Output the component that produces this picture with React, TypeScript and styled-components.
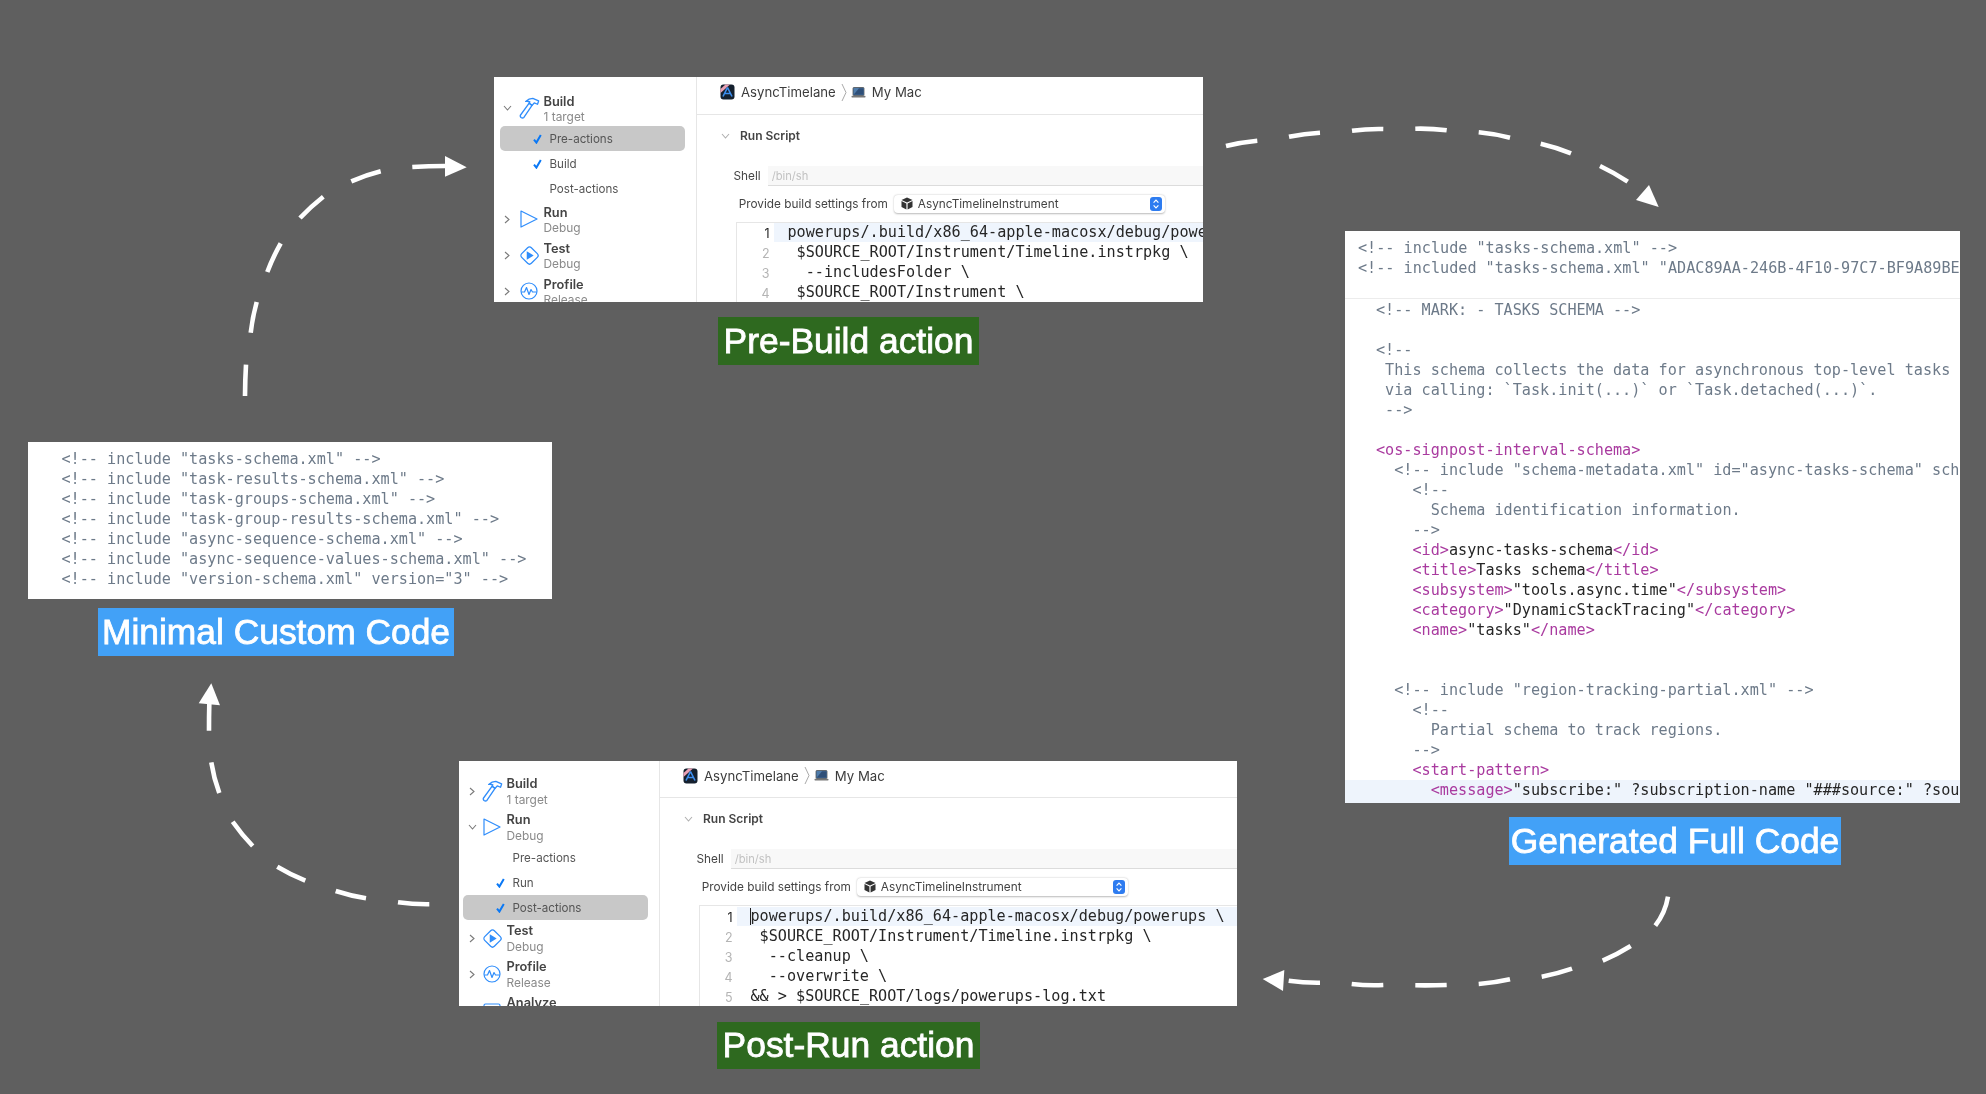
import React from "react";
import styled, { createGlobalStyle } from "styled-components";

const GlobalStyle = createGlobalStyle`
  html, body { margin: 0; padding: 0; background: #5f5f5f; overflow: hidden; }
`;

const MONO = `"DejaVu Sans Mono", "Liberation Mono", monospace`;
const UI = `Inter, "Liberation Sans", sans-serif`;
const BLUE = "#2f8dfb";

const Canvas = styled.div`
  position: relative;
  width: 1986px;
  height: 1094px;
  background: #5f5f5f;
  overflow: hidden;
`;

const Node = styled.div<{ $x: number; $y: number; $w: number; $h: number }>`
  position: absolute;
  left: ${(p) => p.$x}px;
  top: ${(p) => p.$y}px;
  width: ${(p) => p.$w}px;
  height: ${(p) => p.$h}px;
`;

const Panel = styled(Node)`
  background: #fff;
  overflow: hidden;
  filter: blur(0.45px);
`;

const SchemePanel = styled(Panel)`
  display: flex;
`;

const Caption = styled(Node)<{ $bg: string }>`
  display: flex;
  align-items: center;
  justify-content: center;
  background: ${(p) => p.$bg};
  color: #fff;
  font-family: "Liberation Sans", Arial, sans-serif;
  font-size: 35.4px;
  font-weight: 400;
  -webkit-text-stroke: 0.8px #fff;
  white-space: nowrap;
  filter: blur(0.3px);
`;

/* ---------- sidebar ---------- */

const Sidebar = styled.div<{ $w: number; $inset: number; $top: number }>`
  flex: none;
  box-sizing: border-box;
  width: ${(p) => p.$w}px;
  padding-top: ${(p) => p.$top}px;
  border-right: 1px solid #e6e6e6;
  overflow: hidden;
  --inset: ${(p) => p.$inset}px;
  font-family: ${UI};
`;

const GroupRow = styled.div`
  display: flex;
  align-items: center;
  height: 36px;
`;

const Chevron = styled.span`
  flex: none;
  width: 12px;
  margin-left: 7px;
  display: flex;
  justify-content: center;
`;

const IconSlot = styled.span`
  flex: none;
  width: 22px;
  margin-left: calc(3px + var(--inset));
  display: flex;
  justify-content: center;
`;

const GroupText = styled.div`
  margin-left: 3.5px;
  padding-top: 1.6px;
  white-space: nowrap;
`;

const GroupTitle = styled.div`
  font-size: 12.8px;
  line-height: 15.4px;
  font-weight: 600;
  color: #444;
`;

const GroupSub = styled.div`
  font-size: 11.9px;
  line-height: 15.4px;
  color: #8a8a8a;
`;

const ActionRow = styled.div<{ $selected?: boolean }>`
  display: flex;
  align-items: center;
  box-sizing: border-box;
  height: 25px;
  margin: 0 11px 0 calc(3.5px + var(--inset));
  border-radius: 5px;
  background: ${(p) => (p.$selected ? "#c8c8c8" : "transparent")};
`;

const CheckSlot = styled.span`
  flex: none;
  width: 17px;
  margin-left: 33px;
  display: flex;
`;

const ActionLabel = styled.span`
  font-size: 11.6px;
  color: #555;
  white-space: nowrap;
`;

/* ---------- script pane ---------- */

const ScriptPane = styled.div`
  flex: 1;
  min-width: 0;
  overflow: hidden;
  font-family: ${UI};
`;

const PathBar = styled.div<{ $h: number }>`
  display: flex;
  align-items: center;
  box-sizing: border-box;
  height: ${(p) => p.$h}px;
  padding: 0 0 7px 23px;
  border-bottom: 1px solid #e6e6e6;
  font-size: 13.2px;
  color: #3c3c3c;
  white-space: nowrap;
`;

const PathText = styled.span`
  margin-left: 6px;
`;

const PathSep = styled.span`
  display: flex;
  margin: 0 4px 0 5px;
`;

const SectionTitle = styled.div`
  display: flex;
  align-items: center;
  height: 20px;
  margin-top: 10.6px;
  padding-left: 24px;
  font-size: 12px;
  font-weight: 600;
  color: #444;
  gap: 10px;
`;

const ShellRow = styled.div`
  display: flex;
  align-items: center;
  height: 19px;
  margin-top: 21.4px;
  padding-left: 36.5px;
  font-size: 11.8px;
  color: #444;
`;

const ShellField = styled.div`
  flex: 1;
  display: flex;
  align-items: center;
  height: 19px;
  margin-left: 7px;
  padding-left: 4px;
  background: #f8f8f8;
  border-bottom: 1px solid #dcdcdc;
  color: #c2c2c2;
  font-size: 11.2px;
`;

const SettingsRow = styled.div`
  display: flex;
  align-items: center;
  height: 18px;
  margin-top: 9px;
  padding-left: 41.7px;
  font-size: 11.8px;
  color: #444;
  white-space: nowrap;
`;

const SelectBox = styled.div`
  position: relative;
  display: flex;
  align-items: center;
  box-sizing: border-box;
  width: 271px;
  height: 18px;
  margin-left: 6px;
  padding-left: 7px;
  gap: 5px;
  border-radius: 4px;
  background: #fff;
  box-shadow: 0 0.5px 2px rgba(0, 0, 0, 0.28);
`;

const Stepper = styled.span`
  position: absolute;
  right: 3px;
  top: 2px;
  display: flex;
  width: 12px;
  height: 14px;
  border-radius: 3px;
  background: #2e7cf0;
`;

const CodeBox = styled.div<{ $pad: number }>`
  margin: 9px 0 0 38.5px;
  padding-top: ${(p) => p.$pad}px;
  border-left: 1px solid #e6e6e6;
  border-top: 1px solid #e6e6e6;
`;

const ScriptLine = styled.div`
  display: flex;
  height: 20px;
  line-height: 19px;
  font-family: ${MONO};
  font-size: 15.15px;
  white-space: pre;
  color: #262626;
`;

const LineNumber = styled.span<{ $active?: boolean }>`
  flex: none;
  box-sizing: border-box;
  width: 37px;
  padding-right: 4px;
  text-align: right;
  font-size: 12.5px;
  line-height: 21px;
  font-family: ${UI};
  color: ${(p) => (p.$active ? "#222" : "#b4b4b4")};
`;

const LineBody = styled.span<{ $active?: boolean; $caret?: boolean }>`
  flex: 1;
  position: relative;
  padding-left: 14px;
  height: 19px;
  background: ${(p) => (p.$active ? "#eff5fd" : "transparent")};
  ${(p) =>
    p.$caret
      ? `&::before { content: ""; position: absolute; left: 13px; top: 1px; width: 1px; height: 17px; background: #222; }`
      : ""}
`;

const Indent = styled.span<{ $n: number }>`
  padding-left: ${(p) => p.$n}ch;
`;

/* ---------- xml ---------- */

const XmlHead = styled.div`
  box-sizing: border-box;
  height: 67.6px;
  padding: 7.2px 0 0 13px;
  border-bottom: 1px solid #ececec;
`;

const XmlBody = styled.div`
  padding: 1px 0 0 31px;
`;

const MinimalBody = styled.div`
  padding: 7px 0 0 33.5px;
`;

const XmlLine = styled.div<{ $indent?: number; $hl?: boolean }>`
  box-sizing: border-box;
  height: ${(p) => (p.$hl ? 24 : 20.04)}px;
  line-height: 20px;
  font-family: ${MONO};
  font-size: 15.15px;
  white-space: pre;
  color: #6d7a89;
  padding-left: ${(p) => p.$indent ?? 0}ch;
  ${(p) => (p.$hl ? "margin-left: -31px; padding-left: calc(31px + 6ch); background: #eef4fc;" : "")}
`;

const Tag = styled.span`
  color: #a93a9f;
`;

const Val = styled.span`
  color: #262626;
`;

/* ---------- arrows ---------- */

const ArrowLayer = styled.svg`
  position: absolute;
  left: 0;
  top: 0;
  width: 1986px;
  height: 1094px;
  pointer-events: none;
`;

/* ---------- icons ---------- */

const S = { fill: "none", stroke: BLUE, strokeWidth: 1.2, strokeLinejoin: "round" as const };

const Hammer = () => (
  <svg width="21" height="22" viewBox="0 0 19 20">
    <path {...S} d="M1.2 16.6 L9.2 5.6 L11.8 7.6 L4.4 18.6 Q3.2 19.6 1.8 18.6 Q0.8 17.6 1.2 16.6 Z" />
    <path {...S} d="M6 4 Q9 1.2 12.5 1.2 L17.8 3.6 L16.8 6.6 L13.8 5.4 L11.8 7.6 L9.2 5.6 L9.8 4.4 Q8 3.6 6 4 Z" />
  </svg>
);
const RunIcon = () => (
  <svg width="18" height="18" viewBox="0 0 18 18">
    <path {...S} d="M1 1 L17 9 L1 17 Z" />
  </svg>
);
const TestIcon = () => (
  <svg width="21" height="21" viewBox="0 0 20 20">
    <rect {...S} x="3.5" y="3.5" width="13" height="13" rx="2.5" transform="rotate(45 10 10)" />
    <path fill={BLUE} d="M7.4 6 L14 10 L7.4 14 Z" />
  </svg>
);
const ProfileIcon = () => (
  <svg width="18" height="18" viewBox="0 0 18 18">
    <circle {...S} cx="9" cy="9" r="8" />
    <path {...S} d="M1.5 10 L4.5 10 L6.5 5.5 L9 12.5 L11 7.5 L12.5 10 L16.5 10" />
  </svg>
);
const AnalyzeIcon = () => (
  <svg width="18" height="14" viewBox="0 0 18 14">
    <rect {...S} x="1" y="1" width="16" height="12" rx="1.5" />
    <path {...S} d="M9 10 V4 M7 6 L9 4 L11 6" />
  </svg>
);
const ChevronRight = () => (
  <svg width="6" height="9" viewBox="0 0 6 9">
    <path d="M1 1 L5 4.5 L1 8" fill="none" stroke="#7a7a7a" strokeWidth="1.1" />
  </svg>
);
const ChevronDown = ({ color = "#7a7a7a" }: { color?: string }) => (
  <svg width="9" height="6" viewBox="0 0 9 6">
    <path d="M1 1 L4.5 5 L8 1" fill="none" stroke={color} strokeWidth="1.1" />
  </svg>
);
const Check = () => (
  <svg width="9" height="10" viewBox="0 0 9 10">
    <path d="M1 5.6 L3.4 8.6 L7.8 1" fill="none" stroke="#0a78f5" strokeWidth="2" />
  </svg>
);
const AppIcon = () => (
  <svg width="15" height="16" viewBox="0 0 15 16">
    <rect x="0.5" y="0.5" width="14" height="15" rx="3" fill="#14202e" />
    <path d="M0.5 5 L5.5 0.5 L10 0.5 L0.5 9 Z" fill="#e8a0b4" />
    <path d="M7.5 3.5 L12 12.5 M7.5 3.5 L3 12.5 M5 9.5 L10 9.5" stroke="#3d8ff0" strokeWidth="1.6" fill="none" />
  </svg>
);
const LaptopIcon = () => (
  <svg width="15" height="11" viewBox="0 0 15 11">
    <rect x="2" y="0.5" width="11" height="8" rx="0.8" fill="#4f7cab" stroke="#444" strokeWidth="0.7" />
    <path d="M2.6 7.8 L8 1.2 L12.4 1.2 L12.4 7.8 Z" fill="#2f4f78" />
    <rect x="0.5" y="8.8" width="14" height="1.6" rx="0.6" fill="#777" />
  </svg>
);
const PathChevron = () => (
  <svg width="6" height="19" viewBox="0 0 6 19">
    <path d="M1 1 L5 9.5 L1 18" fill="none" stroke="#a0a0a0" strokeWidth="0.9" />
  </svg>
);
const BoxIcon = () => (
  <svg width="12" height="13" viewBox="0 0 12 13">
    <path d="M6 0.5 L11.5 3 L6 5.6 L0.5 3 Z" fill="#333" />
    <path d="M0.5 4 L5.4 6.4 L5.4 12.5 L0.5 10 Z M11.5 4 L6.6 6.4 L6.6 12.5 L11.5 10 Z" fill="#333" />
  </svg>
);
const StepperIcon = () => (
  <svg width="12" height="14" viewBox="0 0 12 14">
    <path d="M3.6 5.6 L6 3.2 L8.4 5.6 M3.6 8.4 L6 10.8 L8.4 8.4" fill="none" stroke="#fff" strokeWidth="1.2" />
  </svg>
);

/* ---------- data ---------- */

type Group = { kind: "group"; icon: React.ReactNode; title: string; sub: string; open?: boolean };
type Action = { kind: "action"; label: string; checked?: boolean; selected?: boolean };
type Row = Group | Action;

const preBuildRows: Row[] = [
  { kind: "group", icon: <Hammer />, title: "Build", sub: "1 target", open: true },
  { kind: "action", label: "Pre-actions", checked: true, selected: true },
  { kind: "action", label: "Build", checked: true },
  { kind: "action", label: "Post-actions" },
  { kind: "group", icon: <RunIcon />, title: "Run", sub: "Debug" },
  { kind: "group", icon: <TestIcon />, title: "Test", sub: "Debug" },
  { kind: "group", icon: <ProfileIcon />, title: "Profile", sub: "Release" },
];

const postRunRows: Row[] = [
  { kind: "group", icon: <Hammer />, title: "Build", sub: "1 target" },
  { kind: "group", icon: <RunIcon />, title: "Run", sub: "Debug", open: true },
  { kind: "action", label: "Pre-actions" },
  { kind: "action", label: "Run", checked: true },
  { kind: "action", label: "Post-actions", checked: true, selected: true },
  { kind: "group", icon: <TestIcon />, title: "Test", sub: "Debug" },
  { kind: "group", icon: <ProfileIcon />, title: "Profile", sub: "Release" },
  { kind: "group", icon: <AnalyzeIcon />, title: "Analyze", sub: "Debug" },
];

const FIRST = "powerups/.build/x86_64-apple-macosx/debug/powerups \\";

const preBuildScript: [number, string][] = [
  [0, FIRST],
  [1, "$SOURCE_ROOT/Instrument/Timeline.instrpkg \\"],
  [2, "--includesFolder \\"],
  [1, "$SOURCE_ROOT/Instrument \\"],
];

const postRunScript: [number, string][] = [
  [0, FIRST],
  [1, "$SOURCE_ROOT/Instrument/Timeline.instrpkg \\"],
  [2, "--cleanup \\"],
  [2, "--overwrite \\"],
  [0, "&& > $SOURCE_ROOT/logs/powerups-log.txt"],
];

const minimalLines = [
  '<!-- include "tasks-schema.xml" -->',
  '<!-- include "task-results-schema.xml" -->',
  '<!-- include "task-groups-schema.xml" -->',
  '<!-- include "task-group-results-schema.xml" -->',
  '<!-- include "async-sequence-schema.xml" -->',
  '<!-- include "async-sequence-values-schema.xml" -->',
  '<!-- include "version-schema.xml" version="3" -->',
];

const Element = ({ name, value, indent }: { name: string; value: string; indent: number }) => (
  <XmlLine $indent={indent}>
    <Tag>{`<${name}>`}</Tag>
    <Val>{value}</Val>
    <Tag>{`</${name}>`}</Tag>
  </XmlLine>
);

/* ---------- arrows data ---------- */

type Seg = [number, number, number, number, number?];
type Arrow = { segs: Seg[]; head: string };

const arrows: Arrow[] = [
  {
    segs: [
      [245, 396, 246, 364.7, 0.4],
      [250.7, 332.7, 256.7, 302],
      [267.3, 272, 280.7, 243.3],
      [300, 218, 323.3, 196.7],
      [351.3, 181.3, 380.7, 171.3],
      [412.3, 167, 445, 166, 0.5],
    ],
    head: "445,156 466.7,167.3 445,176.7",
  },
  {
    segs: [
      [1226, 146, 1257.3, 140.7],
      [1289, 136.7, 1320, 132.7],
      [1352, 130.7, 1383.3, 129],
      [1415.3, 128.7, 1446.7, 130.3],
      [1478.7, 132.3, 1510, 137.7],
      [1540.7, 143.7, 1571, 153.3],
      [1600, 166, 1627.7, 181.7],
    ],
    head: "1649,185 1658.7,207 1636,200",
  },
  {
    segs: [
      [1668, 896.7, 1655.3, 925.7, 4],
      [1630.7, 946, 1602.7, 960.7],
      [1572, 968.7, 1541.7, 976.7],
      [1510, 979.3, 1478.7, 984],
      [1446.7, 985, 1415.3, 985.3, 0.4],
      [1383.3, 985, 1351.7, 984],
      [1320, 982.7, 1288.7, 980.7],
    ],
    head: "1284.3,970 1262.7,979 1283,991",
  },
  {
    segs: [
      [429.3, 904.3, 398, 902.3],
      [366, 898.3, 335.7, 891],
      [305.3, 880.7, 277.3, 866.7],
      [252.7, 846, 232.7, 821.7],
      [219.3, 793, 211.3, 762.3, 1.6],
      [209, 730.7, 209.3, 704, 0.2],
    ],
    head: "198.7,703.3 211.3,683.3 220,705.3",
  },
];

/* a dash bows outward (the loop runs clockwise) by the given control offset */
const dashPath = ([x1, y1, x2, y2, bend = 1.2]: Seg) => {
  const dx = x2 - x1;
  const dy = y2 - y1;
  const len = Math.hypot(dx, dy);
  const cx = (x1 + x2) / 2 + (dy / len) * bend;
  const cy = (y1 + y2) / 2 - (dx / len) * bend;
  return `M${x1} ${y1} Q${cx} ${cy} ${x2} ${y2}`;
};

/* ---------- composed parts ---------- */

const SchemeSidebar = ({ rows, w, inset, top }: { rows: Row[]; w: number; inset: number; top: number }) => (
  <Sidebar $w={w} $inset={inset} $top={top}>
    {rows.map((r, i) =>
      r.kind === "group" ? (
        <GroupRow key={i}>
          <Chevron>{r.open ? <ChevronDown /> : <ChevronRight />}</Chevron>
          <IconSlot>{r.icon}</IconSlot>
          <GroupText>
            <GroupTitle>{r.title}</GroupTitle>
            <GroupSub>{r.sub}</GroupSub>
          </GroupText>
        </GroupRow>
      ) : (
        <ActionRow key={i} $selected={r.selected}>
          <CheckSlot>{r.checked ? <Check /> : null}</CheckSlot>
          <ActionLabel>{r.label}</ActionLabel>
        </ActionRow>
      )
    )}
  </Sidebar>
);

const Pane = ({
  lines,
  bar,
  pad,
  caret,
}: {
  lines: [number, string][];
  bar: number;
  pad: number;
  caret?: boolean;
}) => (
  <ScriptPane>
    <PathBar $h={bar}>
      <AppIcon />
      <PathText>AsyncTimelane</PathText>
      <PathSep>
        <PathChevron />
      </PathSep>
      <LaptopIcon />
      <PathText>My Mac</PathText>
    </PathBar>
    <SectionTitle>
      <ChevronDown color="#b0b0b0" />
      Run Script
    </SectionTitle>
    <ShellRow>
      Shell
      <ShellField>/bin/sh</ShellField>
    </ShellRow>
    <SettingsRow>
      Provide build settings from
      <SelectBox>
        <BoxIcon />
        AsyncTimelineInstrument
        <Stepper>
          <StepperIcon />
        </Stepper>
      </SelectBox>
    </SettingsRow>
    <CodeBox $pad={pad}>
      {lines.map(([indent, text], i) => (
        <ScriptLine key={i}>
          <LineNumber $active={i === 0}>{i + 1}</LineNumber>
          <LineBody $active={i === 0} $caret={caret && i === 0}>
            <Indent $n={indent}>{text}</Indent>
          </LineBody>
        </ScriptLine>
      ))}
    </CodeBox>
  </ScriptPane>
);

export default function App() {
  return (
    <Canvas>
      <GlobalStyle />

      <SchemePanel $x={494} $y={77} $w={709} $h={225}>
        <SchemeSidebar rows={preBuildRows} w={203} inset={2} top={13.3} />
        <Pane lines={preBuildScript} bar={38} pad={0} />
      </SchemePanel>
      <Caption $x={718} $y={317} $w={261} $h={48} $bg="#2e691f">
        Pre-Build action
      </Caption>

      <SchemePanel $x={459} $y={761} $w={778} $h={245}>
        <SchemeSidebar rows={postRunRows} w={201} inset={0} top={12.1} />
        <Pane lines={postRunScript} bar={37} pad={1} caret />
      </SchemePanel>
      <Caption $x={717} $y={1022} $w={263} $h={47} $bg="#2e691f">
        Post-Run action
      </Caption>

      <Panel $x={1345} $y={231} $w={615} $h={572}>
        <XmlHead>
          <XmlLine>{'<!-- include "tasks-schema.xml" -->'}</XmlLine>
          <XmlLine>{'<!-- included "tasks-schema.xml" "ADAC89AA-246B-4F10-97C7-BF9A89BE'}</XmlLine>
        </XmlHead>
        <XmlBody>
          <XmlLine>{"<!-- MARK: - TASKS SCHEMA -->"}</XmlLine>
          <XmlLine />
          <XmlLine>{"<!--"}</XmlLine>
          <XmlLine $indent={1}>This schema collects the data for asynchronous top-level tasks</XmlLine>
          <XmlLine $indent={1}>{"via calling: `Task.init(...)` or `Task.detached(...)`."}</XmlLine>
          <XmlLine $indent={1}>{"-->"}</XmlLine>
          <XmlLine />
          <XmlLine>
            <Tag>{"<os-signpost-interval-schema>"}</Tag>
          </XmlLine>
          <XmlLine $indent={2}>{'<!-- include "schema-metadata.xml" id="async-tasks-schema" sch'}</XmlLine>
          <XmlLine $indent={4}>{"<!--"}</XmlLine>
          <XmlLine $indent={6}>Schema identification information.</XmlLine>
          <XmlLine $indent={4}>{"-->"}</XmlLine>
          <Element indent={4} name="id" value="async-tasks-schema" />
          <Element indent={4} name="title" value="Tasks schema" />
          <Element indent={4} name="subsystem" value={'"tools.async.time"'} />
          <Element indent={4} name="category" value={'"DynamicStackTracing"'} />
          <Element indent={4} name="name" value={'"tasks"'} />
          <XmlLine />
          <XmlLine />
          <XmlLine $indent={2}>{'<!-- include "region-tracking-partial.xml" -->'}</XmlLine>
          <XmlLine $indent={4}>{"<!--"}</XmlLine>
          <XmlLine $indent={6}>Partial schema to track regions.</XmlLine>
          <XmlLine $indent={4}>{"-->"}</XmlLine>
          <XmlLine $indent={4}>
            <Tag>{"<start-pattern>"}</Tag>
          </XmlLine>
          <XmlLine $hl>
            <Tag>{"<message>"}</Tag>
            <Val>{'"subscribe:" ?subscription-name "###source:" ?sou'}</Val>
          </XmlLine>
        </XmlBody>
      </Panel>
      <Caption $x={1509} $y={817} $w={332} $h={48} $bg="#42a1f7">
        Generated Full Code
      </Caption>

      <Panel $x={28} $y={442} $w={524} $h={157}>
        <MinimalBody>
          {minimalLines.map((l) => (
            <XmlLine key={l}>{l}</XmlLine>
          ))}
        </MinimalBody>
      </Panel>
      <Caption $x={98} $y={608} $w={356} $h={48} $bg="#42a1f7">
        Minimal Custom Code
      </Caption>

      <ArrowLayer viewBox="0 0 1986 1094">
        {arrows.map((a, i) => (
          <g key={i}>
            {a.segs.map((s, j) => (
              <path key={j} d={dashPath(s)} fill="none" stroke="#fff" strokeWidth="4.6" />
            ))}
            <polygon points={a.head} fill="#fff" />
          </g>
        ))}
      </ArrowLayer>
    </Canvas>
  );
}
